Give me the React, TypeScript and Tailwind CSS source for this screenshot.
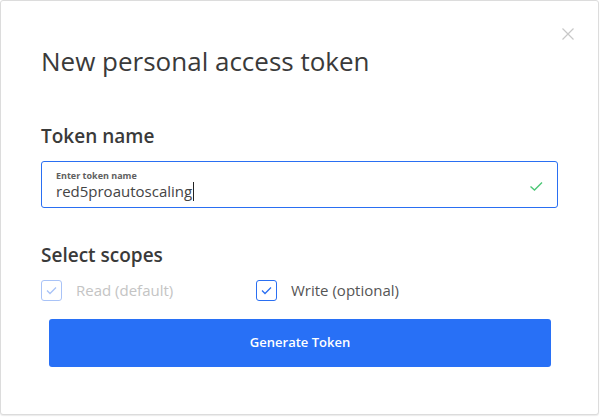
function Checkbox({ checked, disabled }: { checked: boolean; disabled?: boolean }) {
  return (
    <span
      className={`flex h-[21px] w-[21px] items-center justify-center rounded-[3px] border ${
        disabled ? "border-[#a9c3f7]" : "border-[#2a6ff2]"
      }`}
    >
      {checked && (
        <svg width="11" height="9" viewBox="0 0 11 9" fill="none">
          <path
            d="M1 4.5 L4 7.5 L10 1.5"
            stroke={disabled ? "#a9c3f7" : "#2a6ff2"}
            strokeWidth="1.3"
          />
        </svg>
      )}
    </span>
  );
}

export default function App() {
  return (
    <div className="h-[417px] w-[600px] bg-white font-['Open_Sans',sans-serif]">
      <div className="relative h-[415px] w-[599px] rounded-[3px] border border-[#dcdcdc] bg-white px-[40px] pt-[43px] shadow-[0_1px_1px_rgba(0,0,0,0.08)]">
        <button className="absolute right-[24px] top-[27px]">
          <svg width="12" height="12" viewBox="0 0 12 12" fill="none">
            <path d="M0.5 0.5 L11.5 11.5 M11.5 0.5 L0.5 11.5" stroke="#c8c8c8" strokeWidth="1.2" />
          </svg>
        </button>

        <h1 className="text-[26px] leading-[35px] font-normal text-[#3a3a3a]">
          New personal access token
        </h1>

        <h2 className="mt-[45px] text-[19px] leading-[25px] font-semibold text-[#3a3a3a]">
          Token name
        </h2>

        <div className="mt-[12px] flex h-[47px] items-center rounded-[3px] border border-[#2a6ff2] pl-[14px] pr-[13px]">
          <div className="flex flex-1 flex-col">
            <span className="text-[9px] leading-[13px] font-bold text-[#606060]">
              Enter token name
            </span>
            <span className="flex items-center text-[15px] leading-[19px] text-[#444]">
              red5proautoscaling
              <span className="ml-px inline-block h-[19px] w-px bg-[#222]" />
            </span>
          </div>
          <svg width="13" height="9" viewBox="0 0 13 9" fill="none" className="mr-px mt-[3px]">
            <path d="M0.5 4.5 L4.5 8 L12 0.5" stroke="#4cc776" strokeWidth="1.4" />
          </svg>
        </div>

        <h2 className="mt-[35px] text-[19px] leading-[25px] font-semibold text-[#3a3a3a]">
          Select scopes
        </h2>

        <div className="mt-[11px] flex items-center">
          <label className="flex w-[215px] items-center gap-[14px]">
            <Checkbox checked disabled />
            <span className="text-[15px] text-[#c4c4c4]">Read (default)</span>
          </label>
          <label className="flex items-center gap-[14px]">
            <Checkbox checked />
            <span className="text-[15px] text-[#555]">Write (optional)</span>
          </label>
        </div>

        <button className="mx-[8px] mt-[17px] flex h-[48px] w-[502px] items-center justify-center rounded-[3px] bg-[#2870f6] text-[13px] font-semibold text-white">
          Generate Token
        </button>
      </div>
    </div>
  );
}
